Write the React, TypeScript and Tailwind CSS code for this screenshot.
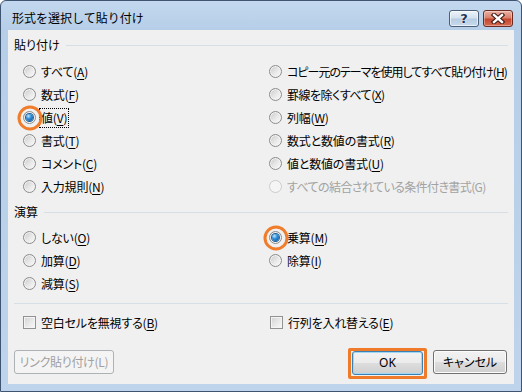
import React from "react";

const FONT = "[font-family:'Noto_Sans_CJK_JP','Noto_Sans',sans-serif] [font-feature-settings:'palt']";

function Radio({ checked, disabled, ring }: { checked?: boolean; disabled?: boolean; ring?: boolean }) {
  return (
    <span
      className={
        "relative inline-flex h-[13px] w-[13px] shrink-0 items-center justify-center rounded-full border " +
        (disabled
          ? "border-[#cccccc] bg-[#f5f5f5]"
          : "border-[#8c8c8c] bg-[linear-gradient(135deg,#c9c9c9_0%,#e9e9e9_55%,#fbfbfb_100%)] shadow-[inset_0_0_0_1px_#f3f3f3]")
      }
    >
      {checked && (
        <span className="h-[7px] w-[7px] rounded-full bg-[radial-gradient(circle_at_35%_30%,#bfe7ff_0%,#2f8fdc_40%,#0b4684_100%)] shadow-[0_0_0_1px_#1d5f9a]" />
      )}
      {ring && (
        <span className="absolute left-1/2 top-1/2 h-[25px] w-[25px] -translate-x-1/2 -translate-y-1/2 rounded-full border-[3px] border-[#f07d2c]" />
      )}
    </span>
  );
}

function Check() {
  return (
    <span className="inline-flex h-[13px] w-[13px] shrink-0 border border-[#929292] bg-[linear-gradient(135deg,#d2d2d2_0%,#e9e9e9_55%,#f9f9f9_100%)] shadow-[inset_0_0_0_1px_#f4f4f4]" />
  );
}

function Lbl({ t, k, disabled, focus, track }: { t: string; k?: string; disabled?: boolean; focus?: boolean; track?: string }) {
  return (
    <span
      className={
        "whitespace-nowrap text-[12px] leading-[16px] " +
        (track ?? "tracking-[-0.2px] ") +
        (disabled ? " text-[#a2a2a2] " : " text-black ") +
        (focus ? "outline outline-1 outline-dotted outline-black px-[1px] py-[1px] -ml-[1px]" : "")
      }
    >
      {t}
      {k !== undefined ? (
        <>
          (<u className="underline underline-offset-2">{k}</u>)
        </>
      ) : null}
    </span>
  );
}

function RadioRow({ t, k, checked, ring, disabled, focus, track }: { t: string; k?: string; checked?: boolean; ring?: boolean; disabled?: boolean; focus?: boolean; track?: string }) {
  return (
    <div className="flex h-[23px] items-center gap-[5px]">
      <Radio checked={checked} ring={ring} disabled={disabled} />
      <Lbl t={t} k={k} disabled={disabled} focus={focus} track={track} />
    </div>
  );
}

function Header({ t, h }: { t: string; h: string }) {
  return (
    <div className={"flex items-center pl-[6px] pr-[6px] " + h}>
      <span className="text-[12px] leading-[16px] text-black">{t}</span>
      <span className="ml-[6px] h-px flex-1 bg-[#d5dfe5]" />
    </div>
  );
}

export default function App() {
  return (
    <div className={"h-[392px] w-[522px] bg-white " + FONT}>
      <div className="flex h-[392px] w-[522px] flex-col rounded-t-[6px] border border-[#3e5470] bg-[linear-gradient(to_bottom,#c3d8ee_0px,#b6cee8_29px,#bed4ec_100%)]">
        {/* Title bar */}
        <div className="flex h-[29px] items-start">
          <span className="ml-[11px] mt-[9px] text-[12px] leading-[16px] text-black [font-feature-settings:normal]">
            形式を選択して貼り付け
          </span>
          <div className="ml-auto mr-[8px] mt-[9px] flex gap-[4px]">
            <div className="flex h-[17px] w-[30px] items-center justify-center rounded-[3px] border border-[#4c5f78] bg-[linear-gradient(to_bottom,#eef4fa_0%,#d4e2f0_45%,#b7cce2_55%,#c9dbee_100%)] shadow-[inset_0_0_0_1px_rgba(255,255,255,0.6)]">
              <span className="text-[13px] font-bold leading-none text-[#1d3454] [text-shadow:0_0_2px_#ffffff,0_0_1px_#ffffff] [font-family:'DejaVu_Sans',sans-serif]">
                ?
              </span>
            </div>
            <div className="flex h-[17px] w-[30px] items-center justify-center rounded-[3px] border border-[#6b2b22] bg-[linear-gradient(to_bottom,#ebb1a4_0%,#d9806c_45%,#c4462f_55%,#d66a4f_100%)] shadow-[inset_0_0_0_1px_rgba(255,255,255,0.35)]">
              <svg width="14" height="11" viewBox="0 0 14 11">
                <path d="M3 2 L11 9 M11 2 L3 9" stroke="#3a1410" strokeWidth="4.4" strokeLinecap="square" />
                <path d="M3 2 L11 9 M11 2 L3 9" stroke="#ffffff" strokeWidth="2.4" strokeLinecap="square" />
              </svg>
            </div>
          </div>
        </div>

        {/* Client area */}
        <div className="mx-[7px] flex h-[354px] w-[506px] flex-col bg-[#f0f0f0]">
          <Header t="貼り付け" h="h-[30px]" />
          <div className="grid grid-cols-[246px_1fr] pl-[15px]">
            <div className="flex flex-col">
              <RadioRow t="すべて" k="A" />
              <RadioRow t="数式" k="F" />
              <RadioRow t="値" k="V" checked ring focus />
              <RadioRow t="書式" k="T" />
              <RadioRow t="コメント" k="C" />
              <RadioRow t="入力規則" k="N" />
            </div>
            <div className="flex flex-col">
              <RadioRow t="コピー元のテーマを使用してすべて貼り付け" k="H" track="tracking-[-1px]" />
              <RadioRow t="罫線を除くすべて" k="X" track="tracking-[-0.5px]" />
              <RadioRow t="列幅" k="W" />
              <RadioRow t="数式と数値の書式" k="R" />
              <RadioRow t="値と数値の書式" k="U" />
              <RadioRow t="すべての結合されている条件付き書式(G)" disabled track="tracking-[-0.6px]" />
            </div>
          </div>

          <Header t="演算" h="h-[28px]" />
          <div className="grid grid-cols-[246px_1fr] pl-[15px]">
            <div className="flex flex-col">
              <RadioRow t="しない" k="O" />
              <RadioRow t="加算" k="D" />
              <RadioRow t="減算" k="S" />
            </div>
            <div className="flex flex-col">
              <RadioRow t="乗算" k="M" checked ring />
              <RadioRow t="除算" k="I" />
            </div>
          </div>

          <div className="mx-[6px] mt-[8px] h-px bg-[#d5dfe5]" />

          <div className="mt-[7px] grid grid-cols-[247px_1fr] pl-[15px]">
            <div className="flex h-[23px] items-center gap-[5px]">
              <Check />
              <Lbl t="空白セルを無視する" k="B" />
            </div>
            <div className="flex h-[23px] items-center gap-[5px]">
              <Check />
              <Lbl t="行列を入れ替える" k="E" />
            </div>
          </div>

          <div className="mt-[16px] flex items-start pl-[6px] pr-[7px]">
            <div className="flex h-[24px] w-[100px] items-center justify-center rounded-[3px] border border-[#adb2b5] bg-[#f4f4f4] text-[12px] tracking-[-0.3px] text-[#a0a0a0]">
              リンク貼り付け(L)
            </div>
            <div className="relative ml-auto mt-[1px] h-[24px] w-[71px]">
              <div className="absolute -bottom-[4px] -left-[4px] -right-[4px] -top-[3px] rounded-[2px] border-[3px] border-[#ef7b2a]" />
              <div className="relative flex h-[24px] w-[71px] items-center justify-center rounded-[3px] border border-[#3c7fb1] bg-[linear-gradient(to_bottom,#f2f2f2_0%,#ebebeb_50%,#dddddd_50%,#cfcfcf_100%)] shadow-[inset_0_0_0_1px_#9fd5f5] text-[12px] text-black [font-family:'Noto_Sans',sans-serif]">
                OK
              </div>
            </div>
            <div className="ml-[10px] flex h-[24px] w-[74px] items-center justify-center rounded-[3px] border border-[#707070] bg-[linear-gradient(to_bottom,#f2f2f2_0%,#ebebeb_50%,#dddddd_50%,#cfcfcf_100%)] shadow-[inset_0_0_0_1px_#fcfcfc] text-[12px] text-black">
              キャンセル
            </div>
          </div>
        </div>
      </div>
    </div>
  );
}
